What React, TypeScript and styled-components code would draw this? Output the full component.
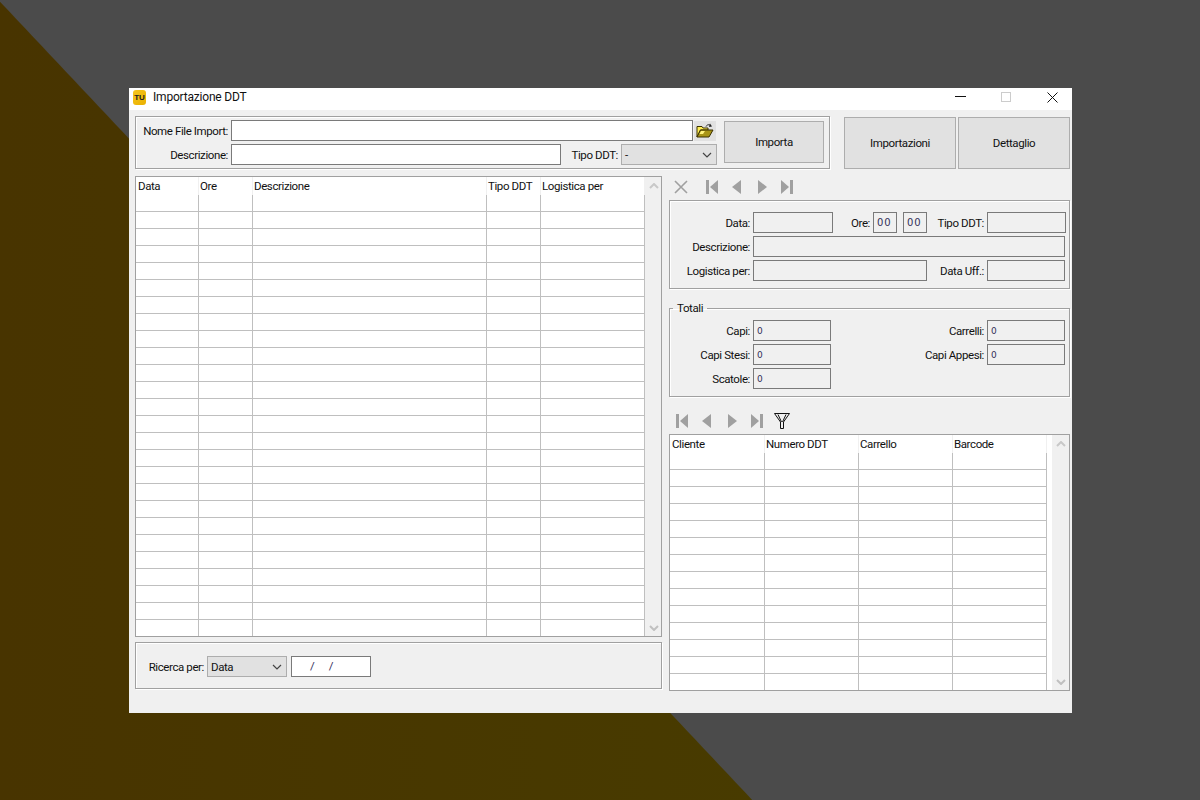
import * as React from 'react';
import styled, { createGlobalStyle } from 'styled-components';

const GlobalStyle = createGlobalStyle`
  html, body {
    margin: 0;
    padding: 0;
    height: 100%;
  }
  body {
    overflow: hidden;
    background-color: #4b4b4b;
  }
  * {
    box-sizing: border-box;
  }
`;

const Desktop = styled.div`
  width: 1200px;
  height: 800px;
  padding: 88px 128px 0 129px;
  background-image:
    linear-gradient(226.7deg, #4b4b4b 874px, transparent 875px),
    linear-gradient(to right, #483400, #483f00);
  font-family: 'Roboto', 'Liberation Sans', sans-serif;
  font-size: 11.5px;
  letter-spacing: -0.4px;
  color: #111;
`;

const Window = styled.div`
  display: flex;
  flex-direction: column;
  width: 943px;
  height: 625px;
  background-color: #f0f0f0;
`;

const TitleBar = styled.div`
  display: flex;
  align-items: center;
  flex: none;
  height: 22px;
  padding: 0 0 4px 4px;
  background-color: #fff;
`;

const AppIcon = styled.span`
  display: flex;
  justify-content: center;
  align-items: center;
  width: 13px;
  height: 15px;
  border-radius: 3px;
  background: linear-gradient(135deg, #f6c51d, #e9b000);
  font-family: 'Liberation Sans', sans-serif;
  font-size: 8px;
  font-weight: 700;
  letter-spacing: 0;
  color: #222;
`;

const TitleText = styled.span`
  flex: 1;
  margin-left: 7px;
  font-size: 12px;
  letter-spacing: -0.2px;
`;

const WindowButton = styled.span`
  display: flex;
  justify-content: center;
  align-items: center;
  width: 46px;
  height: 18px;
  padding-left: 6px;
`;

const Content = styled.div`
  display: flex;
  flex-direction: column;
  flex: 1;
  padding: 6px 2px 0 6px;
`;

const TopRow = styled.div`
  display: flex;
  flex: none;
  height: 53px;
`;

const Etched = styled.div`
  border: 1px solid #a0a0a0;
  box-shadow: 1px 1px 0 #fff, inset 1px 1px 0 #fff;
`;

const ImportPanel = styled(Etched)`
  display: flex;
  width: 695px;
  height: 53px;
  padding: 3px 5px 3px 0;
`;

const ImportFields = styled.div`
  display: flex;
  flex-direction: column;
  gap: 3px;
  width: 588px;
`;

const Row = styled.div`
  display: flex;
  align-items: center;
  gap: 3px;
`;

const Label = styled.span<{ $width: number }>`
  flex: none;
  width: ${props => props.$width}px;
  text-align: right;
  white-space: nowrap;
`;

const TextInput = styled.div<{ $width: number }>`
  flex: none;
  width: ${props => props.$width}px;
  height: 21px;
  border: 1px solid #7a7a7a;
  background-color: #fff;
`;

const ReadField = styled.div<{ $width: number }>`
  display: flex;
  align-items: center;
  flex: none;
  width: ${props => props.$width}px;
  height: 21px;
  padding-left: 3px;
  border: 1px solid #7a7a7a;
  background-color: #f0f0f0;
  font-family: 'DejaVu Sans', sans-serif;
  font-size: 9px;
  color: #33305a;
  letter-spacing: 1px;
`;

const HourField = styled(ReadField)`
  font-size: 10px;
  & + & {
    margin-left: 3px;
  }
`;

const FolderButton = styled.div`
  display: flex;
  justify-content: center;
  align-items: center;
  flex: none;
  width: 22px;
  height: 20px;
  margin-left: -2px;
  background-color: #e1e1e1;
`;

const Select = styled.div<{ $width: number }>`
  display: flex;
  justify-content: space-between;
  align-items: center;
  flex: none;
  width: ${props => props.$width}px;
  height: 21px;
  padding: 0 4px 0 3px;
  border: 1px solid #adadad;
  background-color: #e1e1e1;
`;

const PushButton = styled.div<{ $width: number; $height: number }>`
  display: flex;
  justify-content: center;
  align-items: center;
  flex: none;
  width: ${props => props.$width}px;
  height: ${props => props.$height}px;
  border: 1px solid #adadad;
  background-color: #e1e1e1;
`;

const ImportButton = styled(PushButton)`
  margin-top: 1px;
`;

const TopButtons = styled.div`
  display: flex;
  gap: 2px;
  margin-left: 14px;
  padding-top: 1px;
`;

const Main = styled.div`
  display: flex;
  flex: 1;
  gap: 7px;
  margin-top: 7px;
`;

const LeftColumn = styled.div`
  display: flex;
  flex-direction: column;
  flex: none;
  width: 527px;
  gap: 5px;
`;

const RightColumn = styled.div`
  display: flex;
  flex-direction: column;
  flex: none;
  width: 401px;
`;

const TableFrame = styled.div<{ $height: number }>`
  display: flex;
  flex: none;
  height: ${props => props.$height}px;
  border: 1px solid #a0a0a0;
  background-color: #fff;
  overflow: hidden;
`;

const TableBody = styled.div<{ $width: number }>`
  flex: none;
  width: ${props => props.$width}px;
`;

const TableRow = styled.div`
  display: flex;
  height: 17px;
  border-bottom: 1px solid #bfbfbf;
`;

const HeaderRow = styled.div`
  display: flex;
  height: 18px;
`;

const HeaderCell = styled.div<{ $width: number }>`
  flex: none;
  width: ${props => props.$width}px;
  padding-left: 1px;
  border-right: 1px solid #f0f0f0;
  line-height: 18px;
  white-space: nowrap;

  &:first-child {
    padding-left: 2px;
  }
`;

const Cell = styled.div<{ $width: number }>`
  flex: none;
  width: ${props => props.$width}px;
  border-right: 1px solid #bfbfbf;
`;

const ScrollBar = styled.div`
  display: flex;
  flex-direction: column;
  justify-content: space-between;
  align-items: center;
  flex: none;
  width: 17px;
  margin-left: auto;
  padding: 6px 0 5px;
  background-color: #f0f0f0;
`;

const SearchPanel = styled(Etched)`
  display: flex;
  align-items: center;
  height: 47px;
  padding: 2px 0 0 10px;
`;

const DateInput = styled.div`
  flex: none;
  width: 80px;
  height: 21px;
  margin-left: 1px;
  padding-left: 18px;
  border: 1px solid #7a7a7a;
  background-color: #fff;
  line-height: 19px;
  word-spacing: 12px;
  color: #33305a;
`;

const Toolbar = styled.div<{ $pad: number }>`
  display: flex;
  align-items: center;
  flex: none;
  height: 22px;
  padding-left: ${props => props.$pad}px;
`;

const ToolIcon = styled.span`
  display: flex;
  justify-content: center;
  flex: none;
  width: 25px;
`;

const CloseTool = styled.span`
  display: flex;
  justify-content: center;
  flex: none;
  width: 16px;
  margin-right: 10px;
`;

const RecordsToolbar = styled(Toolbar)`
  margin: 13px 0 2px;
`;

const DetailPanel = styled(Etched)`
  display: flex;
  flex-direction: column;
  gap: 3px;
  height: 89px;
  margin-top: 2px;
  padding-top: 11px;
`;

const Totals = styled.fieldset`
  flex: none;
  height: 96px;
  margin: 12px 0 0;
  padding: 5px 0 0;
  border: 1px solid #a0a0a0;
  box-shadow: 1px 1px 0 #fff, inset 1px 1px 0 #fff;
`;

const TotalsLegend = styled.legend`
  margin-left: 3px;
  padding: 0 4px;
  line-height: 14px;
`;

const TotalsGrid = styled.div`
  display: grid;
  grid-template-columns: 80px 78px 1fr 78px;
  grid-auto-rows: 21px;
  gap: 3px;
  align-items: center;
  padding-right: 4px;
`;

const TotalLabel = styled.span`
  text-align: right;
  white-space: nowrap;
`;

const Funnel = () => (
  <svg width="16" height="16" viewBox="0 0 16 16" fill="none" stroke="#111" strokeWidth="1">
    <path d="M.5 .5h15L9.500 9v6.500h-3V9z" />
    <path d="M4 1.500L7.500 9M12 1.500L8.500 9" />
  </svg>
);

const FolderIcon = () => (
  <svg width="18" height="15" viewBox="0 0 18 15">
    <path d="M1 3.500h5l1 1.500h5v2H4.500L1 14z" fill="#ffee55" stroke="#3a3000" />
    <path d="M1 14l3.500-7H17l-4 7z" fill="#a89414" stroke="#3a3000" />
    <path d="M3.500 11l1.500-3h4l-2 3z" fill="#fff27a" />
    <path d="M10 3.500c1-2 3.500-2.500 5-.5" fill="none" stroke="#222" />
    <path d="M14 .5l2 3-3 .5z" fill="#222" />
  </svg>
);

const Chevron = ({ color, up }: { color: string; up?: boolean }) => (
  <svg width="10" height="6" viewBox="0 0 10 6" fill="none" stroke={color} strokeWidth={up ? 2 : 1.2}>
    <path d={up ? 'M1 5l4-4 4 4' : 'M1 1l4 4 4-4'} />
  </svg>
);

const ScrollDown = () => (
  <svg width="10" height="6" viewBox="0 0 10 6" fill="none" stroke="#c0c0c0" strokeWidth="2">
    <path d="M1 1l4 4 4-4" />
  </svg>
);

const NavIcon = ({ kind }: { kind: 'first' | 'prev' | 'next' | 'last' }) => {
  const shapes = {
    first: (
      <>
        <rect x="2" y="1" width="3" height="14" />
        <path d="M14 1v14L6 8z" />
      </>
    ),
    prev: <path d="M12 1v14L3 8z" />,
    next: <path d="M4 1v14l9-7z" />,
    last: (
      <>
        <path d="M2 1v14l8-7z" />
        <rect x="11" y="1" width="3" height="14" />
      </>
    ),
  };
  return (
    <svg width="16" height="16" viewBox="0 0 16 16" fill="#a0a0a0">
      {shapes[kind]}
    </svg>
  );
};

const LEFT_COLS = [
  { title: 'Data', width: 63 },
  { title: 'Ore', width: 54 },
  { title: 'Descrizione', width: 234 },
  { title: 'Tipo DDT', width: 54 },
  { title: 'Logistica per', width: 104 },
];

const RIGHT_COLS = [
  { title: 'Cliente', width: 95 },
  { title: 'Numero DDT', width: 94 },
  { title: 'Carrello', width: 94 },
  { title: 'Barcode', width: 94 },
];

function DataTable({ cols, rows, height }: { cols: { title: string; width: number }[]; rows: number; height: number }) {
  const total = cols.reduce((sum, col) => sum + col.width, 0);
  return (
    <TableFrame $height={height}>
      <TableBody $width={total}>
        <HeaderRow>
          {cols.map(col => (
            <HeaderCell key={col.title} $width={col.width}>
              {col.title}
            </HeaderCell>
          ))}
        </HeaderRow>
        {Array.from({ length: rows }, (_, i) => (
          <TableRow key={i}>
            {cols.map(col => (
              <Cell key={col.title} $width={col.width} />
            ))}
          </TableRow>
        ))}
      </TableBody>
      <ScrollBar>
        <Chevron color="#c8c8c8" up />
        <ScrollDown />
      </ScrollBar>
    </TableFrame>
  );
}

export default function App() {
  return (
    <Desktop>
      <GlobalStyle />
      <Window>
        <TitleBar>
          <AppIcon>TU</AppIcon>
          <TitleText>Importazione DDT</TitleText>
          <WindowButton>
            <svg width="11" height="2" viewBox="0 0 11 2">
              <rect width="11" height="1" fill="#111" />
            </svg>
          </WindowButton>
          <WindowButton>
            <svg width="10" height="10" viewBox="0 0 10 10" fill="none" stroke="#ccc">
              <rect x=".5" y=".5" width="9" height="9" />
            </svg>
          </WindowButton>
          <WindowButton>
            <svg width="11" height="11" viewBox="0 0 11 11" fill="none" stroke="#111">
              <path d="M.5 .5l10 10M10.500 .5l-10 10" />
            </svg>
          </WindowButton>
        </TitleBar>
        <Content>
          <TopRow>
            <ImportPanel>
              <ImportFields>
                <Row>
                  <Label $width={92}>Nome File Import:</Label>
                  <TextInput $width={462} />
                  <FolderButton>
                    <FolderIcon />
                  </FolderButton>
                </Row>
                <Row>
                  <Label $width={92}>Descrizione:</Label>
                  <TextInput $width={330} />
                  <Label $width={54}>Tipo DDT:</Label>
                  <Select $width={96}>
                    <span>-</span>
                    <Chevron color="#444" />
                  </Select>
                </Row>
              </ImportFields>
              <ImportButton $width={100} $height={42}>
                Importa
              </ImportButton>
            </ImportPanel>
            <TopButtons>
              <PushButton $width={112} $height={52}>
                Importazioni
              </PushButton>
              <PushButton $width={112} $height={52}>
                Dettaglio
              </PushButton>
            </TopButtons>
          </TopRow>
          <Main>
            <LeftColumn>
              <DataTable cols={LEFT_COLS} rows={26} height={461} />
              <SearchPanel>
                <Row>
                  <Label $width={58}>Ricerca per:</Label>
                  <Select $width={80}>
                    <span>Data</span>
                    <Chevron color="#444" />
                  </Select>
                  <DateInput>/ /</DateInput>
                </Row>
              </SearchPanel>
            </LeftColumn>
            <RightColumn>
              <Toolbar $pad={4}>
                <CloseTool>
                  <svg width="14" height="14" viewBox="0 0 14 14" fill="none" stroke="#a0a0a0" strokeWidth="1.6">
                    <path d="M1 1l12 12M13 1L1 13" />
                  </svg>
                </CloseTool>
                <ToolIcon>
                  <NavIcon kind="first" />
                </ToolIcon>
                <ToolIcon>
                  <NavIcon kind="prev" />
                </ToolIcon>
                <ToolIcon>
                  <NavIcon kind="next" />
                </ToolIcon>
                <ToolIcon>
                  <NavIcon kind="last" />
                </ToolIcon>
              </Toolbar>
              <DetailPanel>
                <Row>
                  <Label $width={80}>Data:</Label>
                  <ReadField $width={80} />
                  <Label $width={34}>Ore:</Label>
                  <HourField $width={24}>00</HourField>
                  <HourField $width={24}>00</HourField>
                  <Label $width={54}>Tipo DDT:</Label>
                  <ReadField $width={79} />
                </Row>
                <Row>
                  <Label $width={80}>Descrizione:</Label>
                  <ReadField $width={312} />
                </Row>
                <Row>
                  <Label $width={80}>Logistica per:</Label>
                  <ReadField $width={174} />
                  <Label $width={54}>Data Uff.:</Label>
                  <ReadField $width={78} />
                </Row>
              </DetailPanel>
              <Totals>
                <TotalsLegend>Totali</TotalsLegend>
                <TotalsGrid>
                  <TotalLabel>Capi:</TotalLabel>
                  <ReadField $width={78}>0</ReadField>
                  <TotalLabel>Carrelli:</TotalLabel>
                  <ReadField $width={78}>0</ReadField>
                  <TotalLabel>Capi Stesi:</TotalLabel>
                  <ReadField $width={78}>0</ReadField>
                  <TotalLabel>Capi Appesi:</TotalLabel>
                  <ReadField $width={78}>0</ReadField>
                  <TotalLabel>Scatole:</TotalLabel>
                  <ReadField $width={78}>0</ReadField>
                </TotalsGrid>
              </Totals>
              <RecordsToolbar $pad={0}>
                <ToolIcon>
                  <NavIcon kind="first" />
                </ToolIcon>
                <ToolIcon>
                  <NavIcon kind="prev" />
                </ToolIcon>
                <ToolIcon>
                  <NavIcon kind="next" />
                </ToolIcon>
                <ToolIcon>
                  <NavIcon kind="last" />
                </ToolIcon>
                <ToolIcon>
                  <Funnel />
                </ToolIcon>
              </RecordsToolbar>
              <DataTable cols={RIGHT_COLS} rows={14} height={257} />
            </RightColumn>
          </Main>
        </Content>
      </Window>
    </Desktop>
  );
}
